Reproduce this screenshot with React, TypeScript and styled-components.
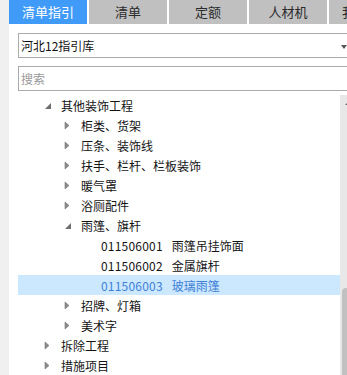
import React from 'react';
import styled, { createGlobalStyle } from 'styled-components';

const GlobalStyle = createGlobalStyle`
  html, body {
    margin: 0;
    padding: 0;
    background: #f0f0f0;
    overflow: hidden;
    font-family: "Noto Sans CJK SC", "Noto Sans", sans-serif;
  }
`

const Shell = styled.div`
  padding-left: 9px;
  width: 400px;
  height: 375px;
`

const Panel = styled.div`
  width: 380px;
  height: 375px;
  background: #ffffff;
  display: flex;
  flex-direction: column;
`

const TabBar = styled.div`
  display: flex;
  gap: 2px;
  height: 24px;
`

const Tab = styled.div<{ $active?: boolean }>`
  flex: 0 0 78px;
  height: 24px;
  line-height: 24px;
  text-align: center;
  font-size: 13px;
  white-space: nowrap;
  overflow: hidden;
  background: ${p => (p.$active ? '#3f9bf7' : '#c0c0c0')};
  color: ${p => (p.$active ? '#ffffff' : '#2b2b2b')};
`

const Body = styled.div`
  padding: 9px 0 0 9px;
  width: 339px;
  display: flex;
  flex-direction: column;
  flex: 1;
`

const Field = styled.div<{ $placeholder?: boolean }>`
  height: 23px;
  border: 1px solid #ababab;
  display: flex;
  align-items: center;
  justify-content: space-between;
  padding: 0 9px 0 2px;
  font-size: 12px;
  color: ${p => (p.$placeholder ? '#9a9a9a' : '#111111')};
  & + & {
    margin-top: 8px;
  }
`

const DropArrow = styled.span`
  width: 0;
  height: 0;
  border-left: 3px solid transparent;
  border-right: 3px solid transparent;
  border-top: 4px solid #555555;
  margin-top: 2px;
`

const TreeArea = styled.div`
  margin-top: 4px;
  display: flex;
  height: 290px;
`

const TreeList = styled.div`
  flex: 1;
  display: flex;
  flex-direction: column;
`

const Row = styled.div<{ $level: number; $selected?: boolean }>`
  height: 20px;
  display: flex;
  align-items: center;
  padding-left: ${p => 25 + p.$level * 20}px;
  font-size: 12px;
  white-space: nowrap;
  background: ${p => (p.$selected ? '#cce8ff' : 'transparent')};
  color: ${p => (p.$selected ? '#3d7fd6' : '#141414')};
`

const Toggle = styled.span`
  flex: 0 0 18px;
  height: 20px;
  display: flex;
  align-items: center;
`

const Code = styled.span`
  margin-right: 9px;
  letter-spacing: 0.2px;
`

const ScrollBar = styled.div`
  flex: 0 0 17px;
  background: #e8e8e8;
  display: flex;
  flex-direction: column;
`

const ScrollUp = styled.div`
  height: 17px;
  display: flex;
  justify-content: flex-start;
  padding: 2px 0 0 3px;
  box-sizing: border-box;
`

const ScrollSpace = styled.div`
  height: 176px;
`

const Thumb = styled.div`
  flex: 1;
  margin: 0 2px;
  background: #c1c1c1;
  border-radius: 4px 4px 0 0;
`

const Collapsed = () => (
  <svg width="6" height="9" viewBox="0 0 6 9">
    <path d="M2 1 L6 4.5 L2 8 Z" fill="#8a8a8a" stroke="#777" strokeWidth="0.6" />
  </svg>
)

const Expanded = () => (
  <svg width="9" height="9" viewBox="0 0 9 9">
    <path d="M8 2 L8 8 L2 8 Z" fill="#6e6e6e" />
  </svg>
)

type Node = {
  label: string
  level: number
  code?: string
  open?: boolean
  leaf?: boolean
  selected?: boolean
}

const nodes: Node[] = [
  { label: '其他装饰工程', level: 0, open: true },
  { label: '柜类、货架', level: 1 },
  { label: '压条、装饰线', level: 1 },
  { label: '扶手、栏杆、栏板装饰', level: 1 },
  { label: '暖气罩', level: 1 },
  { label: '浴厕配件', level: 1 },
  { label: '雨篷、旗杆', level: 1, open: true },
  { label: '雨篷吊挂饰面', code: '011506001', level: 2, leaf: true },
  { label: '金属旗杆', code: '011506002', level: 2, leaf: true },
  { label: '玻璃雨篷', code: '011506003', level: 2, leaf: true, selected: true },
  { label: '招牌、灯箱', level: 1 },
  { label: '美术字', level: 1 },
  { label: '拆除工程', level: 0 },
  { label: '措施项目', level: 0 },
]

const tabs = ['清单指引', '清单', '定额', '人材机', '我的数据']

function App() {
  return <Shell>
    <GlobalStyle />
    <Panel>
      <TabBar>
        {tabs.map((t, i) => <Tab key={t} $active={i === 0}>{t}</Tab>)}
      </TabBar>
      <Body>
        <Field>河北12指引库<DropArrow /></Field>
        <Field $placeholder>搜索</Field>
        <TreeArea>
          <TreeList>
            {nodes.map(n =>
              <Row key={n.label} $level={n.level} $selected={n.selected}>
                <Toggle>
                  {n.leaf ? null : n.open ? <Expanded /> : <Collapsed />}
                </Toggle>
                {n.code && <Code>{n.code}</Code>}
                {n.label}
              </Row>
            )}
          </TreeList>
          <ScrollBar>
            <ScrollUp><Expanded /></ScrollUp>
            <ScrollSpace />
            <Thumb />
          </ScrollBar>
        </TreeArea>
      </Body>
    </Panel>
  </Shell>
}

export default App;
